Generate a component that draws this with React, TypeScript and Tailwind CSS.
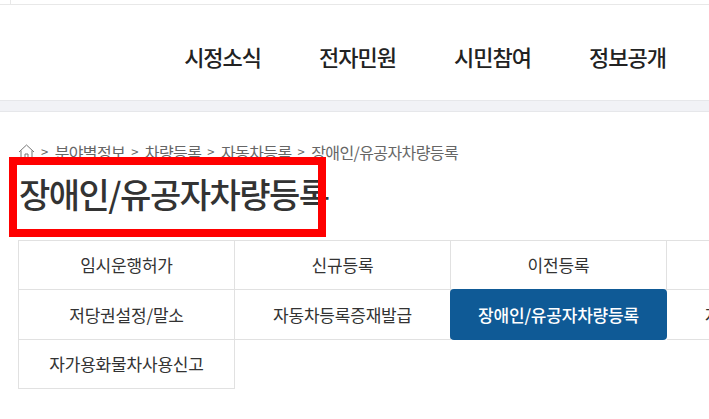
const navItems = ['시정소식', '전자민원', '시민참여', '정보공개'];
const crumbs = ['분야별정보', '차량등록', '자동차등록', '장애인/유공자차량등록'];

const tabs = [
  '임시운행허가',
  '신규등록',
  '이전등록',
  '',
  '저당권설정/말소',
  '자동차등록증재발급',
  '장애인/유공자차량등록',
  '자동차번호판재교부',
  '자가용화물차사용신고',
];

const HomeIcon = () => (
  <svg width="17" height="16" viewBox="0 0 17 16" fill="none" stroke="#777" strokeWidth="1">
    <path d="M1 8 8.5 1 16 8" />
    <path d="M3 6.5V15h11V6.5" />
    <path d="M7 15v-5h3v5" />
  </svg>
);

export default function App() {
  return (
    <div className="relative h-[419px] w-[709px] overflow-hidden bg-white font-['Noto_Sans_CJK_KR',sans-serif] text-[#333]">
      {/* top utility strip */}
      <div className="h-[5px] border-b border-[#e8e8e8]">
        <div className="ml-[10px] h-full w-px bg-[#e8e8e8]" />
      </div>

      {/* main nav */}
      <nav className="flex h-[95px] items-center justify-end gap-[58px] pr-[43px] pt-[8px]">
        {navItems.map((item) => (
          <a key={item} className="text-[22px] font-medium tracking-[-1px] text-[#222]">
            {item}
          </a>
        ))}
      </nav>

      <div className="h-[12px] border-y border-[#e6e7ea] bg-[#f1f2f6]" />

      {/* breadcrumb */}
      <div className="mt-[30px] flex h-[20px] items-center gap-[6px] pl-[18px] text-[16px] tracking-[-0.6px] text-[#666]">
        <HomeIcon />
        {crumbs.map((c) => (
          <span key={c} className="flex items-center gap-[7px]">
            <span className="text-[13px]">&gt;</span>
            {c}
          </span>
        ))}
      </div>

      <h1 className="mt-[12px] h-[40px] whitespace-nowrap pl-[19px] text-[34px] leading-[40px] font-medium tracking-[-1.5px] text-[#333]">
        장애인/유공자차량등록
      </h1>

      {/* tabs */}
      <div className="ml-[18px] mt-[26px] grid w-[865px] grid-cols-[repeat(4,216px)] grid-rows-[49px_50px_49px] border-t border-l border-[#e1e1e1]">
        {tabs.map((t, i) => (
          <a
            key={i}
            className={
              i === 6
                ? 'relative -mt-px -ml-px flex h-[51px] w-[217px] items-center justify-center rounded-[4px] bg-[#0f5a96] text-[17px] font-medium tracking-[-0.2px] text-white'
                : 'flex items-center justify-center border-r border-b border-[#e1e1e1] text-[17px] tracking-[-0.2px] text-[#333]'
            }
          >
            {t}
          </a>
        ))}
      </div>

      {/* red highlight drawn over the screenshot */}
      <div className="absolute left-[9px] top-[157px] h-[80px] w-[317px] border-[8px] border-[#ff0000]" />
    </div>
  );
}
